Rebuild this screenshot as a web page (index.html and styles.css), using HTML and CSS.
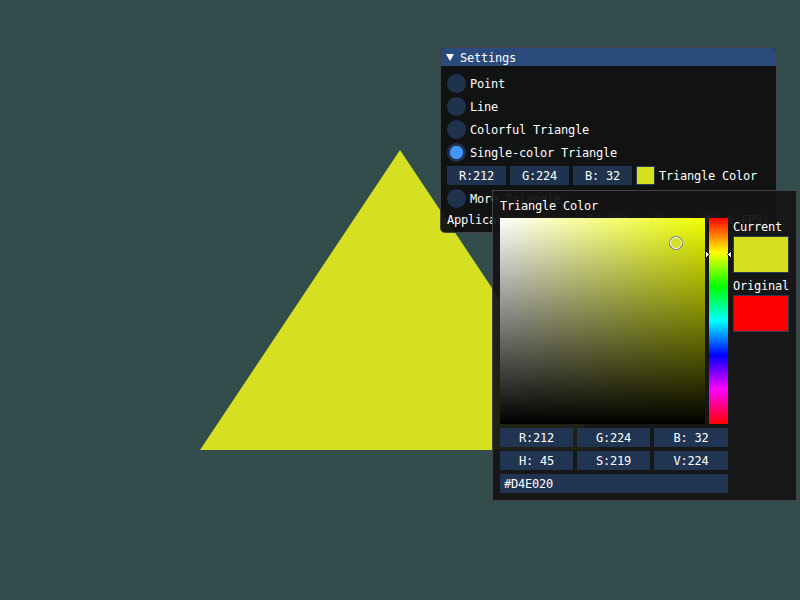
FILE: index.html
```html
<!DOCTYPE html>
<html>
<head>
<meta charset="utf-8">
<link rel="stylesheet" href="styles.css">
</head>
<body>
<div class="scene">
  <svg class="tri" width="800" height="600" viewBox="0 0 800 600"><polygon points="400,150 600,450 200,450" fill="#D4E020"/></svg>

  <div class="win settings">
    <div class="title">
      <svg class="caret" width="8" height="8" viewBox="0 0 8 8"><polygon points="0,1 8,1 4,8" fill="#fff"/></svg>
      <span class="ttl">Settings</span>
    </div>
    <div class="body">
      <div class="row"><span class="radio"></span><span class="txt">Point</span></div>
      <div class="row"><span class="radio"></span><span class="txt">Line</span></div>
      <div class="row"><span class="radio"></span><span class="txt">Colorful Triangle</span></div>
      <div class="row"><span class="radio on"></span><span class="txt">Single-color Triangle</span></div>
      <div class="row">
        <span class="field f59">R:212</span>
        <span class="field f59">G:224</span>
        <span class="field f59">B: 32</span>
        <span class="swatch small cur"></span>
        <span class="txt">Triangle Color</span>
      </div>
      <div class="row"><span class="radio"></span><span class="txt">More Triangle</span></div>
      <div class="line stat">Application average 16.664 ms/frame (60.0 FPS)</div>
    </div>
  </div>

  <div class="popup">
    <div class="line ptitle">Triangle Color</div>
    <div class="picker">
      <div class="sv"><span class="marker"></span></div>
      <div class="hue">
        <svg class="arrows" width="27" height="9" viewBox="0 0 27 9">
          <polygon points="0.5,0.5 4.5,4.5 0.5,8.5" fill="#fff" stroke="#000" stroke-width="1"/>
          <polygon points="26.5,0.5 22.5,4.5 26.5,8.5" fill="#fff" stroke="#000" stroke-width="1"/>
        </svg>
      </div>
      <div class="side">
        <div class="line lbl">Current</div>
        <div class="swatch big cur"></div>
        <div class="line lbl">Original</div>
        <div class="swatch big orig"></div>
      </div>
    </div>
    <div class="fields">
      <span class="field">R:212</span>
      <span class="field">G:224</span>
      <span class="field">B: 32</span>
    </div>
    <div class="fields">
      <span class="field">H: 45</span>
      <span class="field">S:219</span>
      <span class="field">V:224</span>
    </div>
    <div class="hex">#D4E020</div>
  </div>
</div>
</body>
</html>
```

FILE: styles.css
```css
html, body {
  margin: 0;
  padding: 0;
  background: #334D4D;
}

body {
  font-family: "DejaVu Sans Mono", "Liberation Mono", monospace;
  font-size: 12px;
  letter-spacing: -0.22px;
  line-height: 13px;
  color: #ffffff;
}

.scene {
  position: relative;
  width: 800px;
  height: 600px;
  overflow: hidden;
}

.tri {
  position: absolute;
  left: 0;
  top: 0;
}

.win {
  position: absolute;
  box-sizing: border-box;
  border: 1px solid rgba(110, 110, 128, 0.5);
}

.settings {
  left: 440px;
  top: 47px;
  width: 337px;
  border-radius: 5px;
  background: rgba(15, 15, 15, 0.94);
  overflow: hidden;
}

.title {
  height: 18px;
  background: #294A7A;
  display: flex;
  align-items: center;
  padding-left: 5px;
  gap: 6px;
}

.ttl {
  padding-top: 2px;
}

.caret {
  display: block;
}

.body {
  padding: 8px 7px 5px 6px;
  display: flex;
  flex-direction: column;
  gap: 4px;
}

.row {
  height: 19px;
  display: flex;
  align-items: center;
  gap: 4px;
  white-space: pre;
}

.txt {
  padding-top: 2px;
}

.line {
  height: 13px;
  white-space: pre;
}

.stat {
  padding-top: 2px;
}

.radio {
  width: 19px;
  height: 19px;
  border-radius: 50%;
  background: #1F334E;
  flex: none;
}

.radio.on {
  background: radial-gradient(circle at center, #4296FA 0, #4296FA 6.2px, #1F334E 7px);
}

.field {
  box-sizing: border-box;
  height: 19px;
  padding-top: 2px;
  background: #1F334E;
  display: flex;
  align-items: center;
  justify-content: center;
  white-space: pre;
  flex: none;
}

.f59 {
  width: 59px;
}

.swatch {
  box-sizing: border-box;
  border: 1px solid #2C3B52;
  flex: none;
}

.swatch.small {
  width: 19px;
  height: 19px;
}

.cur {
  background: #D4E020;
}

.orig {
  background: #FF0000;
}

.popup {
  position: absolute;
  left: 492px;
  top: 190px;
  width: 305px;
  box-sizing: border-box;
  border: 1px solid rgba(110, 110, 128, 0.5);
  background: rgba(20, 20, 20, 0.94);
  padding: 8px 7px 7px 7px;
}

.ptitle {
  box-sizing: border-box;
  padding-top: 1px;
}

.picker {
  margin-top: 6px;
  display: flex;
  align-items: flex-start;
}

.sv {
  position: relative;
  width: 205px;
  height: 206px;
  background:
    linear-gradient(to top, #000000, rgba(0, 0, 0, 0)),
    linear-gradient(to right, #ffffff, rgb(240, 255, 0));
}

.marker {
  position: absolute;
  left: 170px;
  top: 19px;
  width: 12px;
  height: 12px;
  box-sizing: border-box;
  border-radius: 50%;
  background: #D4E020;
  border: 1px solid #ffffff;
  box-shadow: 0 0 0 1px #808080;
}

.hue {
  position: relative;
  margin-left: 4px;
  width: 19px;
  height: 206px;
  background: linear-gradient(to bottom,
    #ff0000 0%, #ffff00 16.667%, #00ff00 33.333%, #00ffff 50%,
    #0000ff 66.667%, #ff00ff 83.333%, #ff0000 100%);
}

.arrows {
  position: absolute;
  left: -4px;
  top: 32px;
}

.side {
  margin-left: 5px;
  width: 56px;
  display: flex;
  flex-direction: column;
}

.side .lbl {
  box-sizing: border-box;
  height: 14px;
  padding-top: 3px;
  margin-bottom: 4px;
}

.swatch.big {
  width: 56px;
  height: 37px;
  margin-bottom: 4px;
}

.fields {
  margin-top: 4px;
  display: grid;
  grid-template-columns: 73px 73px 74px;
  column-gap: 4px;
}

.popup .field {
  background: #213552;
}

.hex {
  margin-top: 4px;
  width: 228px;
  height: 19px;
  box-sizing: border-box;
  padding: 2px 0 0 4px;
  background: #213552;
  display: flex;
  align-items: center;
}
```
